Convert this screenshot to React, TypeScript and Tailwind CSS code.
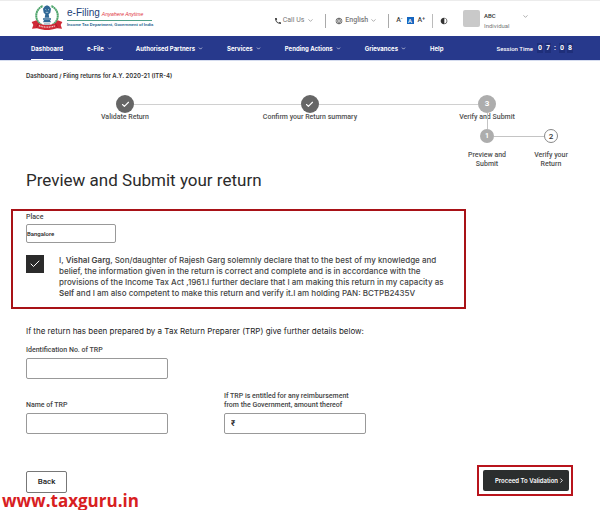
import type { ReactNode } from 'react'
import { Check, ChevronDown, ChevronRight } from 'lucide-react'
import { MdCall, MdLanguage, MdContrast } from 'react-icons/md'

const NAV = [
  { label: 'e-File', menu: true },
  { label: 'Authorised Partners', menu: true },
  { label: 'Services', menu: true },
  { label: 'Pending Actions', menu: true },
  { label: 'Grievances', menu: true },
  { label: 'Help', menu: false },
]

const FIELD = 'block w-full rounded-[2px] border border-[#999] bg-white text-[#222] outline-none'
const LABEL = 'block text-[7px] leading-[9px] font-medium text-[#444]'

function Emblem() {
  return (
    <svg viewBox="0 0 96 75" className="mb-0.5 h-[25px] w-8 shrink-0" role="img" aria-label="Income Tax Department">
      <path d="M32 60C6 44 14 10 36 3" fill="none" stroke="#4fa56c" strokeWidth="6" strokeDasharray="6 1" />
      <path d="M64 60C90 44 82 10 60 3" fill="none" stroke="#4fa56c" strokeWidth="6" strokeDasharray="6 1" />
      <path d="M40 6c3-6 13-6 16 0l4 5-2 12-5 5 2 10h-14l2-10-5-5-2-12z" fill="#2f6795" />
      <path d="M43 13l3 2m5 0l3-2M44 22h8" stroke="#dce8f0" strokeWidth="2" />
      <path d="M36 40h24v4H36zM39 45h18l3 7H36z" fill="#2f6795" />
      <path d="M39 57h18" stroke="#6c8ba6" strokeWidth="3" />
      <path d="M2 51l14-5 7 9c16 7 34 7 50 0l7-9 14 5-5 9 4 11-15-1c-20 7-40 7-60 0l-15 1 4-11z" fill="#cf2a36" />
      <path d="M23 55l-7 13m57-13l7 13" stroke="#9c1822" strokeWidth="2" />
      <path d="M24 62c16 6 32 6 48 0" fill="none" stroke="#f7d5d5" strokeWidth="4" strokeDasharray="3 2" />
    </svg>
  )
}

function Step({ label, children }: { label: string; children: ReactNode }) {
  return (
    <li className="relative flex w-[18px] shrink-0 flex-col items-center">
      {children}
      <span className="text-[7px] leading-[8px] font-medium whitespace-nowrap text-[#505050]">{label}</span>
    </li>
  )
}

function DoneMark() {
  return (
    <span className="flex size-[18px] items-center justify-center rounded-full bg-[#666] text-white">
      <Check size={9} strokeWidth={3} />
    </span>
  )
}

function Header() {
  return (
    <header className="flex h-9 items-center border-t border-[#ececec] bg-white pl-[31px] text-[#777]">
      <Emblem />
      <div className="mb-0.5 ml-1 w-[85px] font-['Liberation_Sans',sans-serif] whitespace-nowrap">
        <div className="flex items-baseline gap-0.5 border-b border-[#4fa08a] leading-[12px]">
          <span className="text-[10px] text-[#1c3f78]">e-Filing</span>
          <span className="text-[5px] text-[#e0303a] italic">Anywhere Anytime</span>
        </div>
        <p className="text-[4px] leading-[8px] font-bold text-[#22628c]">
          Income Tax Department, Government of India
        </p>
      </div>

      <div className="ml-auto flex items-center pt-1 pr-[71px] text-[7px]">
        <button className="flex items-center">
          <MdCall size={8} className="mr-px text-[#444]" />
          Call Us
          <ChevronDown size={7} className="ml-[3px]" />
        </button>
        <span className="mr-[9px] ml-[11px] h-3.5 w-px bg-[#aaa]" />
        <button className="flex items-center font-medium">
          <MdLanguage size={8} className="mr-0.5 text-[#555]" />
          English
          <ChevronDown size={7} className="ml-0.5" />
        </button>
        <span className="mr-[7px] ml-[11px] h-3.5 w-px bg-[#aaa]" />
        <div className="flex items-center gap-1 font-medium text-[#444]">
          <button aria-label="Smaller text">A<sup className="text-[5px]">-</sup></button>
          <button className="size-[7px] bg-[#1666c0] text-[6px] leading-[7px] text-white" aria-label="Normal text">A</button>
          <button aria-label="Larger text">A<sup className="text-[5px]">+</sup></button>
        </div>
        <span className="mx-[7px] h-3.5 w-px bg-[#bbb]" />
        <button aria-label="Contrast"><MdContrast size={8} className="text-[#333]" /></button>
        <span className="mb-1 ml-[15px] size-[17px] rounded-[2px] bg-[#c9c9c9]" />
        <div className="ml-1 w-[38px] text-[6px] leading-[10px]">
          <p className="font-medium text-[#333]">ABC</p>
          <p>Individual</p>
        </div>
        <button className="mb-2" aria-label="Account menu"><ChevronDown size={7} /></button>
      </div>
    </header>
  )
}

function NavBar() {
  return (
    <nav className="flex h-[25px] items-stretch border-b border-[#d5dcef] bg-[#27398c] pr-[27px] pl-[31px] font-[Inter,sans-serif] text-[6px] font-bold whitespace-nowrap text-white">
      <a href="#dashboard" className="flex items-center border-b border-white pt-0.5">Dashboard</a>
      {NAV.map(({ label, menu }) => (
        <a key={label} href={`#${label}`} className="ml-6 flex items-center pt-px">
          {label}
          {menu && <ChevronDown size={5} strokeWidth={3} className="ml-[3px]" />}
        </a>
      ))}
      <div className="ml-auto flex items-center gap-0.5 font-[Roboto,sans-serif] text-[7px]">
        <span className="mr-0.5 text-[6px] font-medium">Session Time</span>
        <span className="bg-[#1f2f7a] px-px">0</span>
        <span className="bg-[#1f2f7a] px-px">7</span>
        <span className="px-px">:</span>
        <span className="bg-[#1f2f7a] px-px">0</span>
        <span className="bg-[#1f2f7a] px-px">8</span>
      </div>
    </nav>
  )
}

function Stepper() {
  return (
    <div className="mt-[14px] pr-[42px] pl-[116px]">
      <ol className="flex items-start pr-[62px]">
        <Step label="Validate Return"><DoneMark /></Step>
        <li aria-hidden className="mt-[9px] h-px flex-[168] bg-[#d0d0d0]" />
        <Step label="Confirm your Return summary"><DoneMark /></Step>
        <li aria-hidden className="mt-[9px] h-px flex-[160] bg-[#d0d0d0]" />
        <Step label="Verify and Submit">
          <span className="flex size-[18px] items-center justify-center rounded-full bg-[#adadad] text-[8px] font-bold text-white">3</span>
          {/* connector down to the sub-steps, crosses the label */}
          <span className="absolute top-[18px] left-[9px] h-4 w-px bg-[#c4c4c4]" />
        </Step>
      </ol>
      <ol className="mt-2 ml-auto flex w-[78px] items-start text-center text-[7px] leading-[9px] font-medium text-[#505050]">
        <li className="flex w-3.5 flex-col items-center">
          <span className="flex size-3.5 items-center justify-center rounded-full bg-[#adadad] font-bold text-white">1</span>
          <span className="mt-2 w-10">Preview and Submit</span>
        </li>
        <li aria-hidden className="mt-[7px] h-px flex-1 bg-[#c4c4c4]" />
        <li className="flex w-3.5 flex-col items-center">
          <span className="flex size-3.5 items-center justify-center rounded-full border border-[#888] text-[8px] text-[#333]">2</span>
          <span className="mt-2 w-10">Verify your Return</span>
        </li>
      </ol>
    </div>
  )
}

export default function App() {
  return (
    <div className="bg-white font-[Roboto,sans-serif] text-[#333]">
      <Header />
      <NavBar />

      <main>
        <p className="mt-[10px] pl-[26px] font-[Inter,sans-serif] text-[6px] leading-[10px] font-semibold text-[#333]">
          <a href="#dashboard">Dashboard</a> / Filing returns for A.Y. 2020-21 (ITR-4)
        </p>
        <Stepper />

        <h1 className="pl-[26px] text-[17px] leading-[22px] text-[#2b2b2b]">Preview and Submit your return</h1>

        {/* Declaration */}
        <section className="mt-[18px] mr-[134px] ml-[11px] border-2 border-[#a81217] pt-[2px] pr-4 pb-[8px] pl-[13px]">
          <label htmlFor="place" className={LABEL}>Place</label>
          <div className="mt-[2px] w-[90px]">
            <input id="place" defaultValue="Bangalore" className={`${FIELD} h-[19px] text-[6px] font-medium`} />
          </div>
          <div className="mt-3 flex items-start">
            <span className="relative size-[18px] shrink-0">
              <input id="declare" type="checkbox" defaultChecked className="block size-full appearance-none bg-[#2b2b2b]" />
              <Check size={12} strokeWidth={2} className="pointer-events-none absolute top-[3px] left-[3px] text-white" />
            </span>
            <label htmlFor="declare" className="ml-[15px] font-[Inter,sans-serif] text-[8px] leading-[11px] font-medium whitespace-nowrap text-[#444]">
              I, <b className="font-semibold">Vishal Garg</b>, Son/daughter of Rajesh Garg solemnly declare that to the best of my knowledge and<br />
              belief, the information given in the return is correct and complete and is in accordance with the<br />
              provisions of the Income Tax Act ,1961.I further declare that I am making this return in my capacity as<br />
              <b className="font-semibold">Self</b> and I am also competent to make this return and verify it.I am holding PAN: BCTPB2435V
            </label>
          </div>
        </section>

        {/* Tax return preparer */}
        <section className="mt-4 pl-[26px]">
          <p className="font-[Inter,sans-serif] text-[8px] leading-[12px] text-[#222]">
            If the return has been prepared by a Tax Return Preparer (TRP) give further details below:
          </p>
          <div className="mt-[9px] w-[142px]">
            <label htmlFor="trp-id" className={LABEL}>Identification No. of TRP</label>
            <input id="trp-id" className={`${FIELD} mt-[3px] h-[21px] px-2 text-[8px]`} />
          </div>
          <div className="mt-[13px] flex items-end gap-14">
            <div className="w-[142px]">
              <label htmlFor="trp-name" className={LABEL}>Name of TRP</label>
              <input id="trp-name" className={`${FIELD} mt-[3px] h-[21px] px-2 text-[8px]`} />
            </div>
            <div className="w-[142px]">
              <label htmlFor="amount" className={LABEL}>
                If TRP is entitled for any reimbursement<br />from the Government, amount thereof
              </label>
              <input id="amount" defaultValue="₹" className={`${FIELD} mt-[3px] h-[21px] px-1.5 text-[8px] font-medium`} />
            </div>
          </div>
        </section>

        <div className="mt-[31px] flex items-start justify-between pr-[27px] pl-[26px]">
          <button className="mt-1.5 h-[22px] w-[41px] rounded-[2px] border border-[#777] text-[8px] font-medium text-[#222]">Back</button>
          <div className="border-2 border-[#b8141c] py-[3px] pr-0.5 pl-1">
            <button className="flex h-[21px] w-[86px] items-center justify-end rounded-[2px] bg-[#2b2e2e] pr-1 font-[Inter,sans-serif] text-[6px] font-semibold whitespace-nowrap text-white">
              Proceed To Validation
              <ChevronRight size={7} strokeWidth={3} />
            </button>
          </div>
        </div>
      </main>

      <footer className="-mt-1 pl-0.5 font-['Open_Sans',sans-serif] text-[17px] leading-[18px] font-bold text-[#d8201f]">
        www.taxguru.in
      </footer>
    </div>
  )
}
